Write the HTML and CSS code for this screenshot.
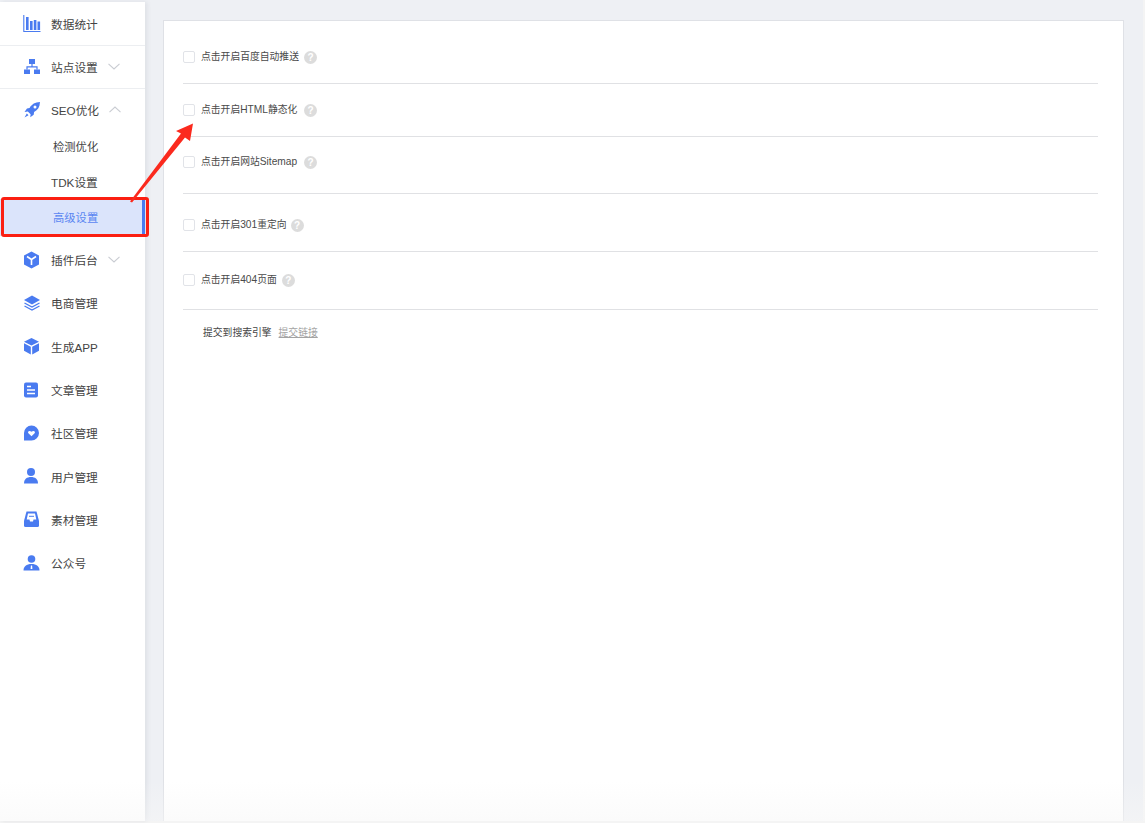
FILE: index.html
```html
<!DOCTYPE html>
<html lang="zh">
<head>
<meta charset="utf-8">
<title>高级设置</title>
<link rel="stylesheet" href="styles.css">
</head>
<body>
<div class="page">
  <aside class="sidebar">
    <div class="item sep h44">
      <svg class="icon" viewBox="0 0 18 18"><path d="M.8 0v16.500H17.500" fill="none" stroke="#4a7bf0" stroke-width="1.100"/><path d="M3 2h2.600v13H3zM7 6h2.600v9H7zM10.800 5h2.600v10h-2.600zM14.500 6.500h2.600V15h-2.600z" fill="#4a7bf0"/></svg>
      <span class="label">数据统计</span>
    </div>
    <div class="item sep h43 item-site">
      <svg class="icon" viewBox="0 0 18 18"><path d="M6 1h6v5H6zM1 11.500h6V16H1zM11 11.500h6V16h-6z" fill="#4a7bf0"/><path d="M9 6v3M4 11.500V8.800h10v2.700" fill="none" stroke="#4a7bf0" stroke-width="1.200"/></svg>
      <span class="label">站点设置</span>
      <svg class="chev" viewBox="0 0 12 7"><path d="M.5.800 6 6l5.500-5.200" fill="none" stroke="#c9ccd2" stroke-width="1.100"/></svg>
    </div>
    <div class="item h41">
      <svg class="icon" viewBox="0 0 18 18"><path d="M17 1c-5 .2-8 2-10.500 6L4 7.500 1.500 11l3.300-.4 2.800 2.600-.3 3.100 3.400-2.600.4-2.600C14.800 9 16.800 6 17 1z" fill="#4a7bf0"/><circle cx="12" cy="6" r="1.500" fill="#fff"/><path d="M3.800 12.500 1.500 16.500l4-2.300z" fill="#4a7bf0"/></svg>
      <span class="label">SEO优化</span>
      <svg class="chev" viewBox="0 0 12 7"><path d="M.5 6.200 6 1l5.500 5.200" fill="none" stroke="#c9ccd2" stroke-width="1.100"/></svg>
    </div>
    <div class="sub sub-first"><span>检测优化</span></div>
    <div class="sub sub-tdk"><span>TDK设置</span></div>
    <div class="sub active"><span>高级设置</span></div>
    <div class="item h43 after-active">
      <svg class="icon" viewBox="0 0 18 18"><path d="M8.500 .5 16 4.500v9l-7.500 4-7.500-4v-9z" fill="#4a7bf0"/><path d="M4 5.500l4.500 3 4.500-3M8.500 8.500V14" fill="none" stroke="#fff" stroke-width="1.600"/></svg>
      <span class="label">插件后台</span>
      <svg class="chev" viewBox="0 0 12 7"><path d="M.5.800 6 6l5.500-5.200" fill="none" stroke="#c9ccd2" stroke-width="1.100"/></svg>
    </div>
    <div class="item h43">
      <svg class="icon" viewBox="0 0 18 18"><path d="M9 1.500 17 6l-8 4.500L1 6z" fill="#4a7bf0"/><path d="M1.500 9 9 13l7.500-4M1.500 12 9 16l7.500-4" fill="none" stroke="#4a7bf0" stroke-width="1.300"/></svg>
      <span class="label">电商管理</span>
    </div>
    <div class="item h43">
      <svg class="icon" viewBox="0 0 18 18"><path d="M8.500 1 16 4.800 8.500 8.500 1 4.800z" fill="#4a7bf0"/><path d="M1 6.300 7.800 9.800v7.700L1 13.700zM16 6.300 9.200 9.800v7.700l6.800-3.800z" fill="#4a7bf0"/></svg>
      <span class="label">生成APP</span>
    </div>
    <div class="item h43">
      <svg class="icon" viewBox="0 0 18 18"><rect x="1" y="1.500" width="14" height="15" rx="2" fill="#4a7bf0"/><path d="M4 5.500h4M4 9h8M4 12.500h8" stroke="#fff" stroke-width="1.300"/></svg>
      <span class="label">文章管理</span>
    </div>
    <div class="item h43">
      <svg class="icon" viewBox="0 0 18 18"><path d="M8.500 1.500a7.500 7.500 0 0 1 0 15H1V9a7.500 7.500 0 0 1 7.500-7.500z" fill="#4a7bf0"/><path d="M8.500 12.300 5.400 9.300c-1.300-1.500.9-3.400 3.100-1.500 2.200-1.900 4.400 0 3.100 1.500z" fill="#fff"/></svg>
      <span class="label">社区管理</span>
    </div>
    <div class="item h43">
      <svg class="icon" viewBox="0 0 18 18"><circle cx="8" cy="5" r="4" fill="#4a7bf0"/><path d="M1 16.500c0-4.500 3-6.500 7-6.500s7 2 7 6.500z" fill="#4a7bf0"/></svg>
      <span class="label">用户管理</span>
    </div>
    <div class="item h43">
      <svg class="icon" viewBox="0 0 18 18"><path d="M3.500 1.500h10l2.500 9.500v4.500a1.500 1.500 0 0 1-1.500 1.500h-12A1.500 1.500 0 0 1 1 15.500V11z" fill="#4a7bf0"/><path d="M5 3.500h7l1.300 6h-2.800l-.5 2H7l-.5-2H3.700z" fill="#fff"/><path d="M6 6.300h5" stroke="#4a7bf0"/></svg>
      <span class="label">素材管理</span>
    </div>
    <div class="item h43">
      <svg class="icon" viewBox="0 0 18 18"><circle cx="8.500" cy="5" r="3.800" fill="#4a7bf0"/><path d="M.5 16.500c0-4 3-6.500 8-6.500s8 2.500 8 6.500z" fill="#4a7bf0"/><path d="M7.900 11.500h1.200l.3 3.500H7.600z" fill="#fff"/></svg>
      <span class="label">公众号</span>
    </div>
  </aside>

  <main class="card">
    <div class="row r1"><span class="check"></span><span class="text">点击开启百度自动推送</span><span class="help">?</span></div>
    <div class="row r2"><span class="check"></span><span class="text text-wide">点击开启<span class="latin">HTML</span>静态化</span><span class="help">?</span></div>
    <div class="row r3"><span class="check"></span><span class="text text-wide">点击开启网站<span class="latin">Sitemap</span></span><span class="help">?</span></div>
    <div class="row r4"><span class="check"></span><span class="text">点击开启<span class="latin">301</span>重定向</span><span class="help help-r4">?</span></div>
    <div class="row r5"><span class="check"></span><span class="text">点击开启<span class="latin">404</span>页面</span><span class="help">?</span></div>
    <div class="submit"><span>提交到搜索引擎</span><a class="link">提交链接</a></div>
  </main>
</div>

<div class="fade"></div>
<div class="mark"></div>
<svg class="arrow" viewBox="0 0 1145 823"><path d="M130 201.500 181 133.500 176 131l17-7.500-3 17.500-5-3.500-53 65z" fill="#fb2a1e"/></svg>
</body>
</html>
```
FILE: styles.css
```css
* { box-sizing: border-box; }
html, body { margin: 0; height: 100%; }
body {
  background: #f4f4f4;
  font-family: "Liberation Sans", "Noto Sans CJK SC", sans-serif;
  color: #333;
  overflow: hidden;
  position: relative;
}
.page {
  display: flex;
  align-items: stretch;
  gap: 18px;
  width: 1143px;
  height: 821px;
  padding-top: 2px;
  background: #eef0f4;
}
.sidebar {
  flex: 0 0 145px;
  background: #fff;
  box-shadow: 2px 0 5px rgba(60, 70, 90, .09);
  display: flex;
  flex-direction: column;
}
.item {
  display: flex;
  align-items: center;
  padding-left: 23px;
  font-size: 11.700px;
  color: #444;
}
.h44 { height: 44px; flex: none; }
.h43 { height: 43.300px; flex: none; }
.h41 { height: 40.700px; flex: none; }
.sep { border-bottom: 1px solid #eceef1; }
.item-site { padding-bottom: 1px; }
.after-active { margin-top: 2px; }
.icon { width: 18px; height: 18px; flex: none; }
.label { margin-left: 10px; white-space: nowrap; }
.chev { width: 12px; height: 7px; margin-left: 10px; flex: none; }
.sub {
  display: flex;
  align-items: center;
  padding-left: 53px;
  font-size: 11.300px;
  color: #444;
  flex: none;
}
.sub-first { height: 32px; }
.sub-tdk { height: 37px; padding-left: 51px; padding-top: 2px; font-size: 11.700px; }
.active {
  height: 37px;
  background: #dbe4fb;
  color: #5a86f2;
  border-right: 3px solid #4a7bf0;
}
.card {
  flex: 0 0 961px;
  margin-top: 18px;
  background: #fff;
  border: 1px solid #dfe1e6;
  border-bottom: 0;
  padding: 10px 25px 0 19px;
  display: flex;
  flex-direction: column;
}
.row {
  display: flex;
  align-items: flex-start;
  border-bottom: 1px solid #e0e1e4;
  font-size: 9.800px;
  color: #4a4a4a;
  flex: none;
}
.r1 { height: 53px; padding-top: 20px; }
.r2 { height: 53px; padding-top: 20px; }
.r3 { height: 57px; padding-top: 19px; }
.r4 { height: 58px; padding-top: 25px; }
.r5 { height: 58px; padding-top: 22px; }
.check {
  width: 12px;
  height: 12px;
  border: 1px solid #e1e3e8;
  border-radius: 2px;
  background: #fff;
  flex: none;
}
.text { margin-left: 6px; line-height: 12px; white-space: nowrap; }
.text-wide { width: 98px; }
.latin { font-size: 10.200px; }
.help {
  width: 13px;
  height: 13px;
  margin-left: 5px;
  border-radius: 50%;
  background: #dcdcdc;
  color: #fff;
  font-size: 10px;
  font-weight: bold;
  line-height: 13px;
  text-align: center;
  flex: none;
}
.help-r4 { margin-left: 4px; }
.submit {
  display: flex;
  gap: 7px;
  padding: 17px 0 0 20px;
  font-size: 9.800px;
  line-height: 12px;
  color: #444;
}
.link { color: #a3a3a3; text-decoration: underline; }
.fade {
  position: absolute;
  left: 0;
  right: 0;
  bottom: 2px;
  height: 40px;
  background: linear-gradient(rgba(250, 250, 250, 0), rgba(247, 247, 247, .5));
  pointer-events: none;
}
.mark {
  position: absolute;
  left: 1px;
  top: 197px;
  width: 148px;
  height: 40px;
  border: 3px solid #fb1f12;
  border-radius: 3px;
}
.arrow {
  position: absolute;
  left: 0;
  top: 0;
  width: 1145px;
  height: 823px;
  pointer-events: none;
}
```
